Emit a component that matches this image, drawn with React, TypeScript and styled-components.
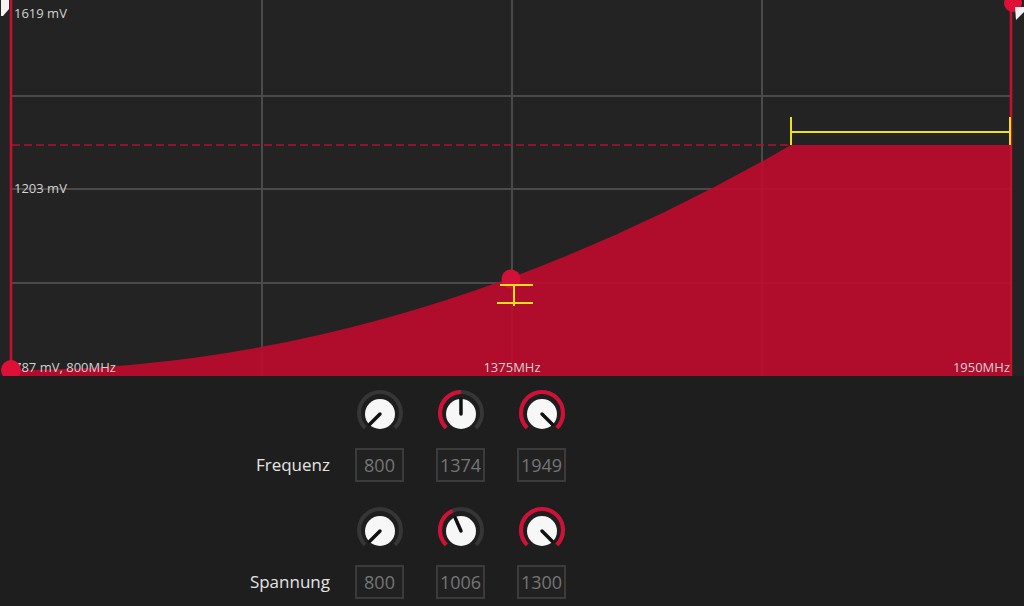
import React from 'react'
import styled, { createGlobalStyle } from 'styled-components'

const GlobalStyle = createGlobalStyle`
  html, body {
    margin: 0;
    padding: 0;
    background: #1e1e1e;
    font-family: "Open Sans", "Liberation Sans", sans-serif;
  }
`;

const Page = styled.div`
  width: 1024px;
  height: 606px;
  overflow: hidden;
  display: flex;
  flex-direction: column;
  background: #1e1e1e;
`;

const ChartBox = styled.div`
  height: 376px;
  background: #232323;
  svg { display: block; }
`;

const Controls = styled.div`
  display: flex;
  flex-direction: column;
  gap: 23px;
  padding-top: 12px;
`;

const Row = styled.div`
  display: flex;
  align-items: flex-end;
`;

const Label = styled.div`
  width: 330px;
  margin-right: 25px;
  height: 34px;
  line-height: 34px;
  text-align: right;
  color: #e4e4e4;
  font-size: 17px;
`;

const Knobs = styled.div`
  display: flex;
  gap: 32px;
`;

const Column = styled.div`
  width: 49px;
  display: flex;
  flex-direction: column;
  align-items: center;
  gap: 10px;
`;

const ValueBox = styled.div`
  box-sizing: border-box;
  width: 49px;
  height: 34px;
  border: 2px solid #3b3b3b;
  background: #212121;
  color: #757575;
  font-size: 18px;
  line-height: 30px;
  text-align: center;
`;

const CHART_TEXT = { fill: '#d2d2d2', fontSize: 13, fontFamily: '"Open Sans", "Liberation Sans", sans-serif' };

function Chart() {
  const gridX = [262, 512, 762];
  const gridY = [96, 189, 283];
  const fill = 'M12,370 Q401,370 791,145 L1012,145 L1012,376 L12,376 Z';
  return (
    <ChartBox>
      <svg width="1024" height="376" viewBox="0 0 1024 376">
        {gridX.map((x) => (
          <line key={x} x1={x} y1={0} x2={x} y2={376} stroke="#4a4a4a" strokeWidth="2" />
        ))}
        {gridY.map((y) => (
          <line key={y} x1={12} y1={y} x2={1012} y2={y} stroke="#4a4a4a" strokeWidth="2" />
        ))}
        <path d={fill} fill="rgba(192,10,46,0.9)" />
        <line x1={12} y1={145} x2={791} y2={145} stroke="#b3102f" strokeWidth="1.5" strokeDasharray="8 4" />

        <line x1={11} y1={0} x2={11} y2={376} stroke="#c8102e" strokeWidth="2.5" />
        <line x1={1011} y1={0} x2={1011} y2={376} stroke="#c8102e" strokeWidth="2.5" />

        {/* yellow markers */}
        <g stroke="#ece21a" strokeWidth="2">
          <line x1={791} y1={132} x2={1010} y2={132} />
          <line x1={791} y1={117} x2={791} y2={145} />
          <line x1={1010} y1={117} x2={1010} y2={145} />
        </g>
        <circle cx={511} cy={279} r={9.5} fill="#d3103a" />
        <g stroke="#ece21a" strokeWidth="2">
          <line x1={500} y1={285} x2={533} y2={285} />
          <line x1={497} y1={303} x2={533} y2={303} />
          <line x1={514} y1={285} x2={514} y2={306} />
        </g>

        <text x={14} y={18} {...CHART_TEXT}>1619 mV</text>
        <text x={14} y={193} {...CHART_TEXT}>1203 mV</text>
        <text x={14} y={372} {...CHART_TEXT}>787 mV, 800MHz</text>
        <text x={512} y={372} textAnchor="middle" {...CHART_TEXT}>1375MHz</text>
        <text x={1010} y={372} textAnchor="end" {...CHART_TEXT}>1950MHz</text>

        <circle cx={11} cy={370} r={10} fill="#de1038" />
        <circle cx={1013} cy={3} r={9} fill="#de1038" />
        <polygon points="1,0 9,0 9,9 3,16 1,16" fill="#f2f2f2" />
        <polygon points="1015,7 1024,7 1024,12 1016,20" fill="#f2f2f2" />
      </svg>
    </ChartBox>
  );
}

function polar(angle: number, r: number) {
  const a = (angle * Math.PI) / 180;
  return [25 + r * Math.sin(a), 25 - r * Math.cos(a)];
}

function arc(from: number, to: number, r: number) {
  const [x1, y1] = polar(from, r);
  const [x2, y2] = polar(to, r);
  const large = to - from > 180 ? 1 : 0;
  return `M${x1},${y1} A${r},${r} 0 ${large} 1 ${x2},${y2}`;
}

function Knob({ value, min, max }: { value: number; min: number; max: number }) {
  const f = Math.max(0, Math.min(1, (value - min) / (max - min)));
  const angle = -135 + 270 * f;
  const [tx, ty] = polar(angle, 14.5);
  return (
    <svg width="50" height="50" viewBox="0 0 50 50">
      <path d={arc(-135, 135, 21)} fill="none" stroke="#363636" strokeWidth="4" />
      {f > 0.01 && <path d={arc(-135, angle, 21)} fill="none" stroke="#d21037" strokeWidth="4" />}
      <circle cx={25} cy={26} r={15} fill="#f7f7f7" />
      <line x1={25} y1={26} x2={tx} y2={ty + 1} stroke="#111" strokeWidth="3.5" strokeLinecap="round" />
    </svg>
  );
}

const rows = [
  { label: 'Frequenz', min: 800, max: 1950, values: [800, 1374, 1949] },
  { label: 'Spannung', min: 800, max: 1300, values: [800, 1006, 1300] },
];

export default function App() {
  return (
    <Page>
      <GlobalStyle />
      <Chart />
      <Controls>
        {rows.map((row) => (
          <Row key={row.label}>
            <Label>{row.label}</Label>
            <Knobs>
              {row.values.map((v, i) => (
                <Column key={i}>
                  <Knob value={v} min={row.min} max={row.max} />
                  <ValueBox>{v}</ValueBox>
                </Column>
              ))}
            </Knobs>
          </Row>
        ))}
      </Controls>
    </Page>
  );
}
